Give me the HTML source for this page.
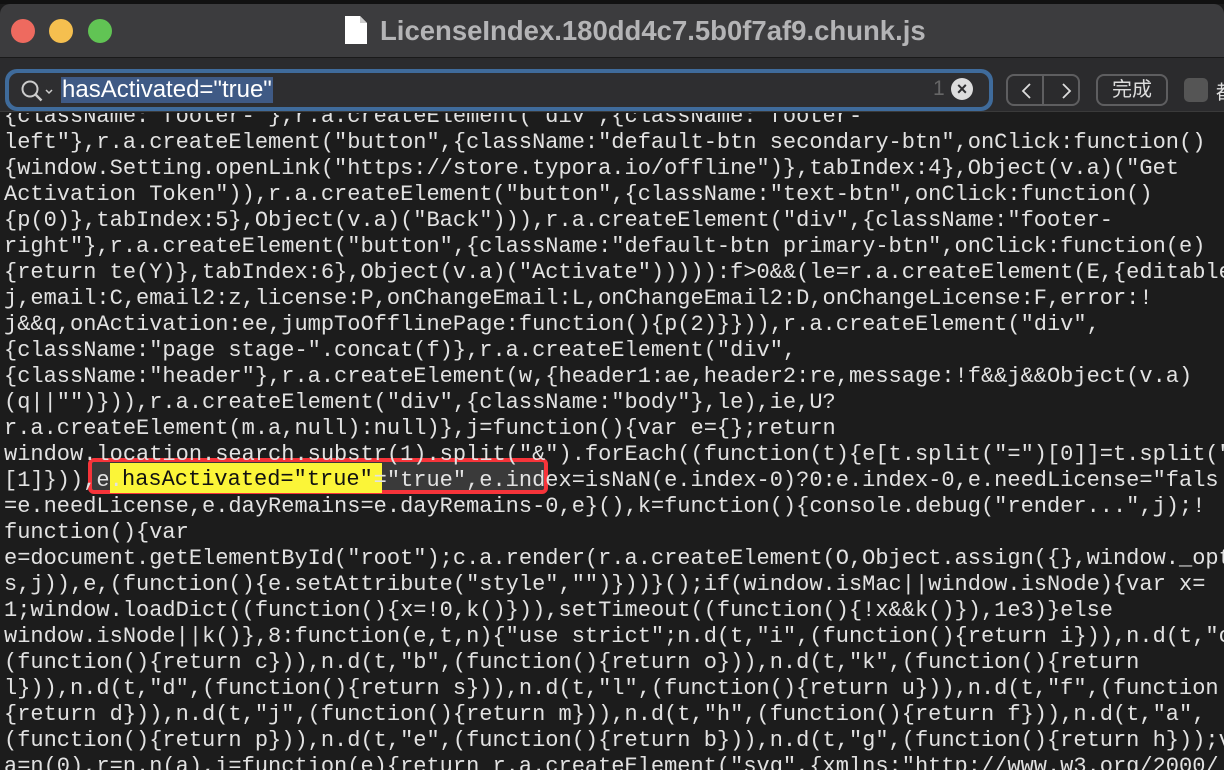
<!DOCTYPE html>
<html><head><meta charset="utf-8"><style>
*{margin:0;padding:0;box-sizing:border-box}
body{width:1224px;height:770px;overflow:hidden;background:#1c1c1c;position:relative;font-family:"Liberation Sans","Noto Sans CJK SC",sans-serif}
.top{position:absolute;left:0;top:0;width:1224px;height:4px;background:#111}
.title{position:absolute;left:0;top:4px;width:1224px;height:54px;background:#3c3c3e;border-radius:10px 10px 0 0;border-bottom:1px solid #1a1a1a}
.dot{position:absolute;top:15px;width:24px;height:24px;border-radius:50%}
.ttl{position:absolute;left:380px;top:11px;font-size:27.5px;font-weight:bold;color:#b4b4b6}
.tool{position:absolute;left:0;top:58px;width:1224px;height:54px;background:#2b2b2d;border-bottom:1px solid #3a3a3a}
.search{position:absolute;left:5px;top:69px;width:988px;height:42px;border-radius:12px;background:#3f6b9b;padding:4px}
.search .in{width:100%;height:100%;background:#2e2e30;border-radius:9px;position:relative}
.sel{position:absolute;left:52px;top:4px;height:26px;background:#3f5a85;color:#fff;font-size:24px;line-height:26px;padding:0 1px}
.btn{position:absolute;border:2px solid #5e5e60;border-radius:8px;top:74px;height:32px;color:#ddd}
pre{position:absolute;left:4px;top:102px;font-family:"Liberation Mono",monospace;font-size:22px;line-height:26px;color:#e2e2e2;white-space:pre}
.code{position:absolute;left:0;top:113px;width:1224px;height:657px;overflow:hidden}
</style></head><body>
<div class="top"></div>
<div class="title">
<div class="dot" style="left:11px;background:#ee6a5f"></div>
<div class="dot" style="left:49px;background:#f5bf4f"></div>
<div class="dot" style="left:88px;background:#61c454"></div>
<svg style="position:absolute;left:344px;top:11px" width="24" height="30"><path d="M1 1h15l7 7v21H1z" fill="#fff"/><path d="M16 1v7h7" fill="#ccc"/></svg>
<div class="ttl">LicenseIndex.180dd4c7.5b0f7af9.chunk.js</div>
</div>
<div class="tool"></div>
<div class="search"><div class="in">
<svg style="position:absolute;left:10px;top:6px" width="40" height="26"><circle cx="11" cy="10" r="7.5" fill="none" stroke="#ccc" stroke-width="2"/><path d="M16.5 15.5l6 6" stroke="#ccc" stroke-width="2.5"/><path d="M27 11l3 3 3-3" fill="none" stroke="#ccc" stroke-width="1.5"/></svg>
<div class="sel">hasActivated="true"</div>
<div style="position:absolute;left:924px;top:4px;color:#666;font-size:21px">1</div>
<div style="position:absolute;left:942px;top:5px;width:22px;height:22px;border-radius:50%;background:#ddd;color:#2e2e30;font-size:18px;font-weight:bold;text-align:center;line-height:22px">×</div>
</div></div>
<div class="btn" style="left:1006px;width:74px"><div style="position:absolute;left:34px;top:0;width:2px;height:28px;background:#5e5e60"></div>
<svg style="position:absolute;left:9px;top:6px" width="60" height="18"><path d="M13 2L6 9l7 7M46 2l7 7-7 7" fill="none" stroke="#ddd" stroke-width="1.8"/></svg></div>
<div class="btn" style="left:1096px;width:72px;font-size:20px;text-align:center;line-height:28px">完成</div>
<div style="position:absolute;left:1184px;top:78px;width:24px;height:24px;border-radius:5px;background:#555"></div>
<div style="position:absolute;left:1216px;top:76px;color:#ddd;font-size:20px">都</div>
<div class="code">
<div style="position:absolute;left:88px;top:345px;width:460px;height:36px;border:4px solid #f6343a;border-radius:6px;background:#3a3a3a"></div>
<div style="position:absolute;left:110px;top:350px;width:272px;height:30px;background:#fbf538"></div>
<pre style="top:-9px">{className:"footer-"},r.a.createElement("div",{className:"footer-
left"},r.a.createElement("button",{className:"default-btn secondary-btn",onClick:function()
{window.Setting.openLink("https://store.typora.io/offline")},tabIndex:4},Object(v.a)("Get
Activation Token")),r.a.createElement("button",{className:"text-btn",onClick:function()
{p(0)},tabIndex:5},Object(v.a)("Back"))),r.a.createElement("div",{className:"footer-
right"},r.a.createElement("button",{className:"default-btn primary-btn",onClick:function(e)
{return te(Y)},tabIndex:6},Object(v.a)("Activate"))))):f>0&amp;&amp;(le=r.a.createElement(E,{editable
j,email:C,email2:z,license:P,onChangeEmail:L,onChangeEmail2:D,onChangeLicense:F,error:!
j&amp;&amp;q,onActivation:ee,jumpToOfflinePage:function(){p(2)}})),r.a.createElement("div",
{className:"page stage-".concat(f)},r.a.createElement("div",
{className:"header"},r.a.createElement(w,{header1:ae,header2:re,message:!f&amp;&amp;j&amp;&amp;Object(v.a)
(q||"")})),r.a.createElement("div",{className:"body"},le),ie,U?
r.a.createElement(m.a,null):null)},j=function(){var e={};return
window.location.search.substr(1).split("&amp;").forEach((function(t){e[t.split("=")[0]]=t.split("
[1]})),e.                   ="true",e.index=isNaN(e.index-0)?0:e.index-0,e.needLicense="fals
=e.needLicense,e.dayRemains=e.dayRemains-0,e}(),k=function(){console.debug("render...",j);!
function(){var
e=document.getElementById("root");c.a.render(r.a.createElement(O,Object.assign({},window._opt
s,j)),e,(function(){e.setAttribute("style","")}))}();if(window.isMac||window.isNode){var x=
1;window.loadDict((function(){x=!0,k()})),setTimeout((function(){!x&amp;&amp;k()}),1e3)}else
window.isNode||k()},8:function(e,t,n){"use strict";n.d(t,"i",(function(){return i})),n.d(t,"c
(function(){return c})),n.d(t,"b",(function(){return o})),n.d(t,"k",(function(){return
l})),n.d(t,"d",(function(){return s})),n.d(t,"l",(function(){return u})),n.d(t,"f",(function
{return d})),n.d(t,"j",(function(){return m})),n.d(t,"h",(function(){return f})),n.d(t,"a",
(function(){return p})),n.d(t,"e",(function(){return b})),n.d(t,"g",(function(){return h}));v
a=n(0),r=n.n(a),i=function(e){return r.a.createElement("svg",{xmlns:"http://www.w3.org/2000/</pre>
<div style="position:absolute;left:122px;top:354px;font-family:'Liberation Mono',monospace;font-size:22px;line-height:26px;color:#111;white-space:pre">hasActivated="true"</div>
</div>
</body></html>
